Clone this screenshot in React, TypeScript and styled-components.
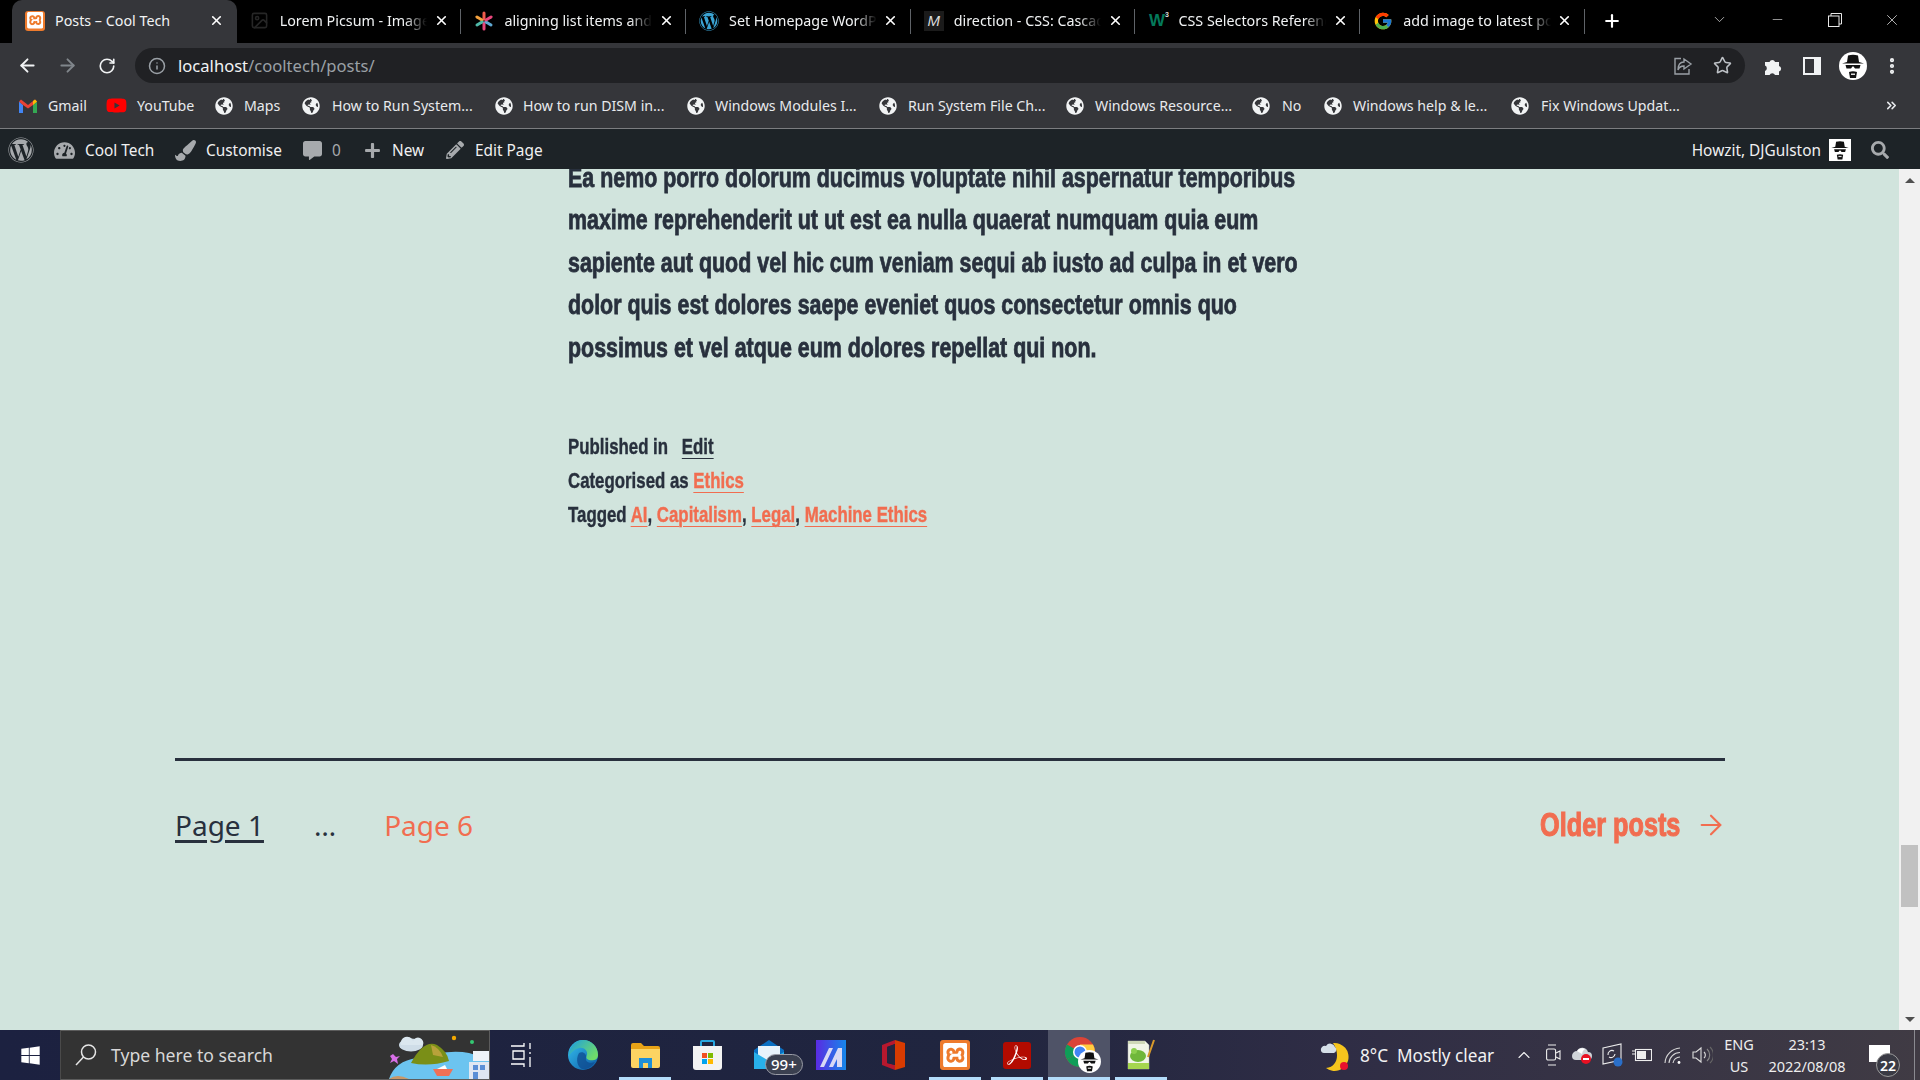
import React from "react";
import styled, { createGlobalStyle } from "styled-components";
import {
  FaGlobeAmericas, FaWordpress, FaTachometerAlt, FaPaintBrush, FaCommentAlt,
  FaPlus, FaPencilAlt, FaSearch, FaWindows, FaYoutube,
} from "react-icons/fa";
import { FcGoogle } from "react-icons/fc";
import { SiXampp, SiAdobeacrobatreader } from "react-icons/si";
import {
  ArrowLeft, ArrowRight, RotateCw, Info, Star, Plus, ChevronDown, Minus, X, ChevronUp, Image as ImageIcon, MoreVertical, ChevronsRight,
} from "lucide-react";

const UI = `"Noto Sans", "Open Sans", sans-serif`;
const HEAVY = `"Liberation Sans", "Arimo", sans-serif`;

const Global = createGlobalStyle`
  html, body { margin: 0; padding: 0; height: 1080px; overflow: hidden; background: #d1e4dd; }
  #root { height: 1080px; }
  * { box-sizing: border-box; }
`;

const Shell = styled.div`
  width: 1920px; height: 1080px; display: flex; flex-direction: column; font-family: ${UI}; overflow: hidden;
`;

/* tab strip */
const TabStrip = styled.div`
  height: 43px; background: #000; display: flex; align-items: stretch; padding-left: 12px; flex: none;
`;
const Tab = styled.div<{ $active?: boolean; $sep?: boolean }>`
  position: relative; width: 224.7px; flex: none; display: flex; align-items: center; padding: 0 12px 2px 13px;
  color: #f1f3f4; font-size: 14.3px;
  background: ${(p) => (p.$active ? "#35363a" : "transparent")};
  border-radius: ${(p) => (p.$active ? "10px 10px 0 0" : "0")};
  &::after {
    content: ""; position: absolute; right: 0; top: 9px; height: 25px; width: 1px;
    background: ${(p) => (p.$sep ? "#5f6368" : "transparent")};
  }
`;
const Favicon = styled.span`
  width: 20px; height: 20px; flex: none; display: flex; align-items: center; justify-content: center; margin-right: 10px;
`;
const TabLabel = styled.span<{ $fade?: boolean }>`
  flex: 1; min-width: 0; overflow: hidden; white-space: nowrap; margin-right: 6px;
  ${(p) => (p.$fade ? "mask-image: linear-gradient(90deg, #000 85%, transparent 100%);" : "")}
`;
const CloseTab = styled.span`
  width: 16px; height: 16px; flex: none; display: flex; align-items: center; justify-content: center; color: #fff;
`;
const NewTab = styled.span`
  width: 54px; flex: none; display: flex; align-items: center; justify-content: center; color: #fff; padding-bottom: 2px;
`;
const StripRight = styled.div`
  margin-left: auto; display: flex; align-items: center;
`;
const WinCtl = styled.span<{ $w: number }>`
  width: ${(p) => p.$w}px; height: 43px; display: flex; align-items: center; justify-content: center; color: #e8e8e8; padding-bottom: 4px;
`;
const Fav = styled.span<{ $bg: string; $size?: number; $tall?: number }>`
  width: ${(p) => p.$size ?? 20}px; height: ${(p) => p.$tall ?? p.$size ?? 20}px; border-radius: 3px; background: ${(p) => p.$bg}; display: flex; align-items: center; justify-content: center; color: #fff;
`;
const MdnM = styled.span`
  width: 20px; height: 20px; background: #1b1b1b; color: #ddd; font-family: "Liberation Sans", sans-serif; font-style: italic; font-size: 15px; display: flex; align-items: center; justify-content: center;
`;
const W3 = styled.span`
  color: #04795a; font-family: "Liberation Sans", sans-serif; font-weight: 700; font-size: 17px; letter-spacing: -1px; display: flex;
  sup { font-size: 7px; color: #ddd; line-height: 8px; margin-left: 1px; }
`;

/* toolbar */
const ToolBar = styled.div`
  height: 40px; background: #35363a; display: flex; align-items: flex-end; flex: none; padding-top: 5px; color: #f1f3f4;
`;
const NavBtn = styled.span<{ $w: number; $dim?: boolean; $pad?: string }>`
  width: ${(p) => p.$w}px; height: 35px; flex: none; display: flex; align-items: center; justify-content: center;
  padding: ${(p) => p.$pad ?? "0"};
  color: ${(p) => (p.$dim ? "#80868b" : "#f1f3f4")};
`;
const Omni = styled.div`
  width: 1610px; height: 35px; flex: none; background: #202124; border-radius: 18px; display: flex; align-items: center; padding: 0 4px 0 13px; margin-right: 8px;
`;
const Url = styled.div`
  margin-left: 12px; font-size: 16.6px; color: #f1f3f4; flex: 1;
  span { color: #9aa0a6; }
`;

/* bookmarks */
const Bookmarks = styled.div`
  height: 46px; background: #35363a; border-bottom: 1px solid #7c7d80; display: flex; align-items: center; padding-left: 19px; flex: none;
`;
const Bookmark = styled.div<{ $w: number }>`
  width: ${(p) => p.$w}px; flex: none; display: flex; align-items: center; white-space: nowrap; font-size: 14.2px; color: #e8eaed;
`;
const BmIcon = styled.span<{ $w: number }>`
  width: ${(p) => p.$w}px; flex: none; display: flex; align-items: center; color: #f1f3f4;
`;
const BmMore = styled.span`
  margin-left: auto; width: 36px; color: #e8eaed; display: flex;
`;

/* admin bar */
const AdminBar = styled.div`
  height: 40px; background: #1d2327; flex: none; display: flex; align-items: center; padding: 2px 0 0 8px; color: #f0f0f1; font-size: 15.4px;
`;
const AdminItem = styled.div<{ $w: number; $dim?: boolean }>`
  width: ${(p) => p.$w}px; flex: none; display: flex; align-items: center; white-space: nowrap;
  color: ${(p) => (p.$dim ? "#a7aaad" : "#f0f0f1")};
`;
const AdminIcon = styled.span<{ $w: number }>`
  width: ${(p) => p.$w}px; flex: none; display: flex; align-items: center; color: #a7aaad;
`;
const AdminRight = styled.div`
  margin-left: auto; display: flex; align-items: center; padding-right: 31px;
`;
const AdminAvatar = styled.span`
  width: 22px; height: 22px; background: #fff; margin: 0 20px 0 8px; display: flex; align-items: center; justify-content: center; overflow: hidden;
`;

/* page */
const Middle = styled.div`
  flex: 1; min-height: 0; display: flex;
`;
const Page = styled.main`
  flex: 1; min-width: 0; background: #d1e4dd; overflow: hidden; color: #28303d;
`;
const Article = styled.article`
  margin-top: -12.5px; padding-left: 568px;
`;
const BodyLine = styled.div`
  font-family: ${HEAVY}; font-weight: 700; font-size: 28px; line-height: 42.5px; white-space: nowrap;
  -webkit-text-stroke: 0.8px #28303d; transform: scaleX(0.765); transform-origin: 0 50%;
`;
const Meta = styled.div`
  margin-top: 61px; font-family: ${HEAVY}; font-weight: 700; font-size: 22px; line-height: 34px; -webkit-text-stroke: 0.4px #28303d;
`;
const MetaRow = styled.div`
  white-space: nowrap; transform: scaleX(0.765); transform-origin: 0 50%;
`;
const EditLink = styled.a`
  margin-left: 18px; color: #28303d; text-decoration: underline; text-underline-offset: 4px; text-decoration-thickness: 1px;
`;
const TagLink = styled.a`
  color: #f16d50; -webkit-text-stroke: 0.4px #f16d50; text-decoration: underline; text-underline-offset: 4px; text-decoration-thickness: 1px;
`;
const Pager = styled.nav`
  margin: 226px 174px 0 175px; border-top: 3px solid #28303d; padding-top: 42px; display: flex; align-items: center; height: 88px;
`;
const PageNum = styled.a<{ $cur?: boolean }>`
  font-size: 28px; line-height: 44px;
  color: ${(p) => (p.$cur ? "#28303d" : "#f16d50")};
  ${(p) => (p.$cur ? "text-decoration: underline; text-decoration-thickness: 3px; text-underline-offset: 4px;" : "")}
`;
const Dots = styled.span`
  font-size: 28px; line-height: 44px; margin: 0 48px 0 50px; color: #28303d;
`;
const Older = styled.a`
  margin-left: auto; display: flex; align-items: center; color: #f16d50; gap: 15px; margin-right: -2px;
`;
const OlderText = styled.span`
  font-family: ${HEAVY}; font-weight: 700; font-size: 33px; line-height: 44px; -webkit-text-stroke: 1.1px #f16d50; transform: scaleX(0.765); transform-origin: 100% 50%;
  white-space: nowrap;
`;

/* scrollbar */
const ScrollBar = styled.div`
  width: 21px; flex: none; background: #f1f1f1; display: flex; flex-direction: column; align-items: center; padding: 9px 0 8px;
`;
const ArrowUp = styled.span`
  width: 0; height: 0; border-left: 5px solid transparent; border-right: 5px solid transparent; border-bottom: 5px solid #505050;
`;
const Thumb = styled.div`
  width: 17px; height: 62px; background: #c1c1c1; margin-top: 662px;
`;
const ArrowDown = styled.span`
  margin-top: auto; width: 0; height: 0; border-left: 5px solid transparent; border-right: 5px solid transparent; border-top: 5px solid #505050;
`;

/* taskbar */
const Taskbar = styled.footer`
  height: 50px; flex: none; display: flex; align-items: stretch; color: #fff;
  background: linear-gradient(90deg, #1c2140 0%, #20253f 50%, #2f2d45 70%, #403b44 100%);
`;
const Start = styled.div`
  width: 60px; flex: none; display: flex; align-items: center; justify-content: center; color: #fff;
`;
const SearchBox = styled.div`
  width: 430px; flex: none; background: #333; border: 1px solid #5c5c5c; border-left-color: #4a4a4a; display: flex; align-items: center; padding-left: 14px; overflow: hidden;
`;
const SearchText = styled.span`
  margin-left: 14px; font-size: 17.6px; color: #d8d8d8; flex: 1; white-space: nowrap;
`;
const TaskCell = styled.div<{ $active?: boolean; $open?: boolean }>`
  position: relative; width: 62px; flex: none; display: flex; align-items: center; justify-content: center;
  padding-left: ${(p) => (p.$active ? "8px" : "0")};
  background: ${(p) => (p.$active ? "#4f5367" : "transparent")};
  &::after {
    content: ""; position: absolute; bottom: 0; height: 3px;
    left: ${(p) => (p.$active ? "0" : "5px")}; right: ${(p) => (p.$active ? "0" : "5px")};
    background: ${(p) => (p.$open ? "#b3dcfa" : "transparent")};
  }
`;
const Badge = styled.span`
  position: absolute; left: 27px; top: 24px; height: 21px; padding: 0 5px; border-radius: 11px; background: #3b4050; border: 1px solid #9a9ca6; color: #fff; font-size: 15px; line-height: 18px; font-weight: 500;
`;
const Tray = styled.div`
  margin-left: auto; display: flex; align-items: center;
`;
const Slot = styled.div<{ $w: number }>`
  width: ${(p) => p.$w}px; flex: none; display: flex; align-items: center; white-space: nowrap; font-size: 17.2px; color: #f2f2f2;
`;
const StackText = styled.div<{ $w: number }>`
  width: ${(p) => p.$w}px; flex: none; display: flex; flex-direction: column; align-items: center; font-size: 14.5px; line-height: 22px; color: #eee;
`;
const NoteBadge = styled.span`
  position: absolute; left: 7px; top: 23px; width: 24px; height: 24px; border-radius: 50%; background: #3a3a44; border: 1px solid #9a9a9a; color: #fff; font-size: 14px; font-weight: 600; display: flex; align-items: center; justify-content: center;
`;
const NoteWrap = styled.div`
  position: relative; width: 45px; height: 50px; flex: none; margin-left: 13px;
`;
const NoteSheet = styled.span`
  position: absolute; left: 0; top: 15px; width: 21px; height: 17px; background: #fff;
`;
const ShowDesk = styled.div`
  width: 6px; height: 50px; flex: none; border-left: 1px solid #8a8a90;
`;

/* drawings */
const Heisenberg = ({ size = 28, round = true }: { size?: number; round?: boolean }) => (
  <svg width={size} height={size} viewBox="0 0 28 28">
    {round ? <circle cx="14" cy="14" r="14" fill="#fff" /> : <rect width="28" height="28" fill="#fff" />}
    <path d="M8 10 L9 3.5 Q14 2 19 3.5 L20 10 L25 11.5 L3 11.5 Z" fill="#111" />
    <path d="M6.5 13 H21.5 L20.5 16.5 H16 L14.5 14.5 H13.5 L12 16.5 H7.5 Z" fill="#111" />
    <path d="M10 20 Q14 18.5 18 20 L17 26 H11 Z" fill="#111" />
    <rect x="12" y="21.5" width="4" height="1.5" fill="#ddd" />
  </svg>
);
const Xampp = ({ size = 20 }: { size?: number }) => (
  <Fav $bg="#ee7b2d" $size={size}><SiXampp size={size * 0.82} color="#fff" /></Fav>
);
const Asterisk = () => (
  <svg width="20" height="20" viewBox="0 0 20 20" strokeWidth="3" strokeLinecap="round">
    <path d="M10 2v6" stroke="#ef5b4c" /><path d="M10 12v6" stroke="#e8467c" />
    <path d="M3 6l5 3" stroke="#f2a03d" /><path d="M12 11l5 3" stroke="#5fa8d3" />
    <path d="M17 6l-5 3" stroke="#e8467c" /><path d="M8 11l-5 3" stroke="#4fb8a8" />
  </svg>
);
const GmailM = () => (
  <svg width="18" height="14" viewBox="0 0 18 14">
    <path d="M0 2.5V14h4V6z" fill="#4285f4" /><path d="M18 2.5V14h-4V6z" fill="#34a853" />
    <path d="M0 2.5 L2 0.5 L9 6 L16 0.5 L18 2.5 L14 6 L9 9.5 L4 6 Z" fill="#ea4335" />
    <path d="M14 6 L18 2.5 L16 0.5 L14 2Z" fill="#fbbc04" />
  </svg>
);
const ShareIcon = () => (
  <svg width="20" height="20" viewBox="0 0 20 20" fill="none" stroke="#9aa0a6" strokeWidth="1.4">
    <path d="M8 2.5H2V18h14v-5" /><path d="M11 3l7 5-7 5v-3C8 10 6 11 5 14c0-5 2-8 6-8z" />
  </svg>
);
const Puzzle = () => (
  <svg width="20" height="20" viewBox="0 0 20 20" fill="#f1f3f4">
    <path d="M2 6h4.5a3 3 0 015.6 0H16v4a2.9 2.9 0 010 5.6V19h-4a2.9 2.9 0 00-5.4 0H2v-4a2.9 2.9 0 000-5.4z" />
  </svg>
);
const SidePanel = () => (
  <svg width="18" height="18" viewBox="0 0 18 18"><path fillRule="evenodd" d="M0 0h18v18H0z M2 2v14h9V2z" fill="#f1f3f4" /></svg>
);
const RestoreIcon = () => (
  <svg width="14" height="14" viewBox="0 0 14 14" fill="none" stroke="#e8e8e8"><rect x="0.5" y="3" width="10.5" height="10.5" /><path d="M3 3V0.5H13.5V11H11" /></svg>
);
const TaskViewIcon = () => (
  <svg width="21" height="24" viewBox="0 0 21 24" fill="none" stroke="#fff" strokeWidth="1.3">
    <path d="M0 3h13v-3M0 21h13v3M2 8h11v8H2z" /><path d="M19 0v6M19 9v2M19 14v10" />
  </svg>
);
const Edge = () => (
  <svg width="30" height="30" viewBox="0 0 30 30">
    <defs>
      <linearGradient id="eg1" x1="0" y1="0" x2="1" y2="1"><stop offset="0" stopColor="#35c1f1" /><stop offset="1" stopColor="#0c59a4" /></linearGradient>
      <linearGradient id="eg2" x1="0" y1="0" x2="1" y2="0.6"><stop offset="0" stopColor="#1b9de2" /><stop offset="1" stopColor="#6fdb6a" /></linearGradient>
    </defs>
    <circle cx="15" cy="15" r="15" fill="url(#eg1)" />
    <path d="M15 0C24 0 30 7 30 15c0 5-5 6-9 5-3-1-3-3-2-5 1-4-3-8-8-7-4 1-8 4-10 8C1 7 7 0 15 0z" fill="url(#eg2)" />
    <path d="M11 13c4-2 8 1 7 5s4 6 9 4c-3 5-8 8-13 7-4-2-7-9-3-16z" fill="#0f4b8f" opacity=".75" />
  </svg>
);
const Folder = () => (
  <svg width="29" height="25" viewBox="0 0 29 25">
    <path d="M0 2a2 2 0 012-2h8l3 3h14a2 2 0 012 2v2H0z" fill="#e8a317" />
    <path d="M0 6h29v17a2 2 0 01-2 2H2a2 2 0 01-2-2z" fill="#fcd462" />
    <path d="M8 15h13v10h-4v-5h-5v5H8z" fill="#1d8fd8" />
  </svg>
);
const Store = () => (
  <svg width="29" height="30" viewBox="0 0 29 30">
    <path d="M8 6V2a1 1 0 011-1h11a1 1 0 011 1v4" fill="none" stroke="#28a7e0" strokeWidth="2" />
    <path d="M0 6h29v21a3 3 0 01-3 3H3a3 3 0 01-3-3z" fill="#f3f3f3" />
    <rect x="9" y="13" width="5" height="5" fill="#f25022" /><rect x="15" y="13" width="5" height="5" fill="#7fba00" />
    <rect x="9" y="19" width="5" height="5" fill="#00a4ef" /><rect x="15" y="19" width="5" height="5" fill="#ffb900" />
  </svg>
);
const Mail = () => (
  <svg width="30" height="30" viewBox="0 0 30 30">
    <path d="M15 0L30 10V29H0V10z" fill="#0a6fc2" />
    <rect x="4" y="6" width="22" height="14" fill="#e8f3fb" />
    <path d="M0 12l15 9 15-9v17H0z" fill="#28b0ea" />
  </svg>
);
const Matlabish = () => (
  <svg width="30" height="30" viewBox="0 0 30 30">
    <defs><linearGradient id="mg" x1="0" y1="0" x2="1" y2="0"><stop offset="0" stopColor="#5a2be2" /><stop offset="1" stopColor="#1687ea" /></linearGradient></defs>
    <rect width="30" height="30" fill="url(#mg)" />
    <path d="M4 27L13 8h4L8 27zM13 27L22 8h4v19h-5v-8l-4 8z" fill="#d9d9f5" />
  </svg>
);
const Office = () => (
  <svg width="23" height="30" viewBox="0 0 23 30">
    <path d="M13 0L23 3V27L13 30V0z" fill="#d83b01" />
    <path d="M13 0L0 5V25L13 30V25L5 23V7L13 4z" fill="#b7182e" />
    <path d="M5 7L13 4V25L5 23z" fill="#23253f" />
  </svg>
);
const Acrobat = () => (
  <Fav $bg="#b30b00" $size={28} $tall={27}><SiAdobeacrobatreader size={20} color="#fff" /></Fav>
);
const Chrome = () => (
  <svg width="36" height="36" viewBox="0 0 36 36">
    <circle cx="15" cy="15" r="15" fill="#db4437" />
    <path d="M15 15L2 22.5A15 15 0 0015 30z" fill="#0f9d58" /><path d="M2 7.5A15 15 0 002 22.5L15 15z" fill="#0f9d58" />
    <path d="M15 15h15A15 15 0 0028 7.5H15z" fill="#ffcd40" /><path d="M15 15L15 30A15 15 0 0030 15z" fill="#ffcd40" />
    <circle cx="15" cy="15" r="7" fill="#fff" /><circle cx="15" cy="15" r="5.5" fill="#4285f4" />
    <g transform="translate(13 13) scale(.82)"><Heisenberg size={28} /></g>
  </svg>
);
const NotepadPP = () => (
  <svg width="28" height="32" viewBox="0 0 28 32">
    <path d="M1 2h17l4 4v24H1z" fill="#f1f5e8" stroke="#bbb" strokeWidth=".5" />
    <path d="M1 2h17v3H1z" fill="#cfd8b8" />
    <ellipse cx="11" cy="17" rx="8" ry="6" fill="#6fb73a" /><circle cx="7" cy="12" r="3" fill="#8bcf4d" />
    <path d="M1 24h21v6H1z" fill="#a5d64f" />
    <path d="M21 18L27 1" stroke="#d89a2b" strokeWidth="2" />
  </svg>
);
const Island = () => (
  <svg width="100" height="48" viewBox="0 0 100 48">
    <ellipse cx="22" cy="14" rx="12" ry="6.5" fill="#cfdde8" />
    <path d="M12 14a6 6 0 0112 -4a5 5 0 0110 4z" fill="#dbe7ef" />
    <circle cx="65" cy="7" r="2.2" fill="#f4a900" /><circle cx="83" cy="11" r="2" fill="#34c972" />
    <path d="M4 23l3 3 4-1-3 3 1 5-4-3-4 2 2-4-2-3z" fill="#d86fe8" />
    <path d="M0 48Q6 30 28 27Q60 18 80 22L100 28V48z" fill="#6cc4f0" />
    <path d="M22 32Q35 8 48 14Q58 20 60 30Q40 36 22 32z" fill="#7a8f17" />
    <path d="M42 14Q50 16 54 26L44 24z" fill="#b9a23a" />
    <path d="M0 48Q8 42 20 48z" fill="#c99868" />
    <path d="M44 38h20l-4 7H48z" fill="#f07057" /><path d="M48 38l8-4 2 4z" fill="#fff" />
    <rect x="84" y="20" width="16" height="10" fill="#eef3f8" /><rect x="80" y="31" width="20" height="17" fill="#dfe7f2" />
    <rect x="84" y="34" width="5" height="5" fill="#5a8fd6" /><rect x="91" y="34" width="5" height="5" fill="#5a8fd6" /><rect x="84" y="41" width="5" height="7" fill="#5a8fd6" />
  </svg>
);
const Moon = () => (
  <svg width="30" height="32" viewBox="0 0 30 32">
    <path d="M13 4a14 14 0 11-7 25C18 28 20 14 13 4z" fill="#f6c51d" />
    <path d="M1 12a4 4 0 015-5 5 5 0 019 1 3.5 3.5 0 01-1 6H4a3 3 0 01-3-2z" fill="#d5dfe8" />
    <circle cx="24" cy="27" r="4" fill="#e8112d" />
  </svg>
);
const Meet = () => (
  <svg width="15" height="22" viewBox="0 0 15 22" fill="none" stroke="#eee" strokeWidth="1.1">
    <path d="M2 1h8M2 21h8" /><rect x="0.6" y="5" width="9" height="11" rx="1.5" /><path d="M10 9l4-2v8l-4-2" />
  </svg>
);
const OneDrive = () => (
  <svg width="20" height="18" viewBox="0 0 20 18">
    <path d="M0 10a5 5 0 015-5a6 6 0 0111 1a4 4 0 010 8H4a4 4 0 01-4-4z" fill="#cfd3d8" />
    <path d="M5 5a6 6 0 018-2a6 6 0 00-3 5z" fill="#fff" />
    <circle cx="14" cy="13" r="5" fill="#e81123" /><rect x="11" y="12" width="6" height="2" fill="#fff" />
  </svg>
);
const Sync = () => (
  <svg width="21" height="24" viewBox="0 0 21 24" fill="none" stroke="#eee" strokeWidth="1.1">
    <path d="M1 5L19 1V17L1 21z" /><path d="M6 12a4 4 0 016-4M13 11a4 4 0 01-6 3" />
    <circle cx="16" cy="19" r="4.5" fill="#2a6fc9" stroke="none" />
  </svg>
);
const Battery = () => (
  <svg width="20" height="14" viewBox="0 0 20 14" fill="none" stroke="#eee" strokeWidth="1.1">
    <rect x="3.5" y="1.5" width="16" height="11" /><rect x="5" y="3" width="9" height="8" fill="#eee" stroke="none" /><path d="M0 3h4M0 6h4" />
  </svg>
);
const Wifi = () => (
  <svg width="17" height="18" viewBox="0 0 17 18" fill="none" stroke="#d8d8d8" strokeWidth="1.1">
    <path d="M1 17A16 16 0 0116 2" /><path d="M5 17A11 11 0 0116 6.5" /><path d="M9 17A7 7 0 0116 11" />
    <circle cx="15" cy="16.5" r="1.4" fill="#fff" stroke="none" />
  </svg>
);
const Speaker = () => (
  <svg width="21" height="20" viewBox="0 0 21 20" fill="none" stroke="#ddd" strokeWidth="1.1">
    <path d="M1 7h3l5-4v14l-5-4H1z" /><path d="M12 7a4 4 0 010 6" /><path d="M15 4a8 8 0 010 12" stroke="#888" /><path d="M18 2a11 11 0 010 16" stroke="#666" />
  </svg>
);
const SearchGlass = () => (
  <svg width="22" height="24" viewBox="0 0 22 24" fill="none" stroke="#e6e6e6" strokeWidth="1.5">
    <circle cx="13.5" cy="9" r="7" /><path d="M8.5 14L1 22" />
  </svg>
);

const TABS = [
  { t: "Lorem Picsum - Images", i: <ImageIcon size={19} color="#262626" /> },
  { t: "aligning list items and", i: <Asterisk /> },
  { t: "Set Homepage WordPress", i: <FaWordpress size={20} color="#3aa3d3" /> },
  { t: "direction - CSS: Cascading", i: <MdnM>M</MdnM> },
  { t: "CSS Selectors Reference", i: <W3>W<sup>3</sup></W3> },
  { t: "add image to latest post", i: <FcGoogle size={20} /> },
];

const MARKS: { t: string; w: number; icon?: React.ReactNode; iw: number }[] = [
  { t: "Gmail", w: 87, icon: <GmailM />, iw: 29 },
  { t: "YouTube", w: 109, icon: <FaYoutube size={21} color="#f00" />, iw: 31 },
  { t: "Maps", w: 87, iw: 29 },
  { t: "How to Run System...", w: 193, iw: 30 },
  { t: "How to run DISM in...", w: 192, iw: 28 },
  { t: "Windows Modules I...", w: 192, iw: 28 },
  { t: "Run System File Ch...", w: 187, iw: 29 },
  { t: "Windows Resource...", w: 186, iw: 29 },
  { t: "No", w: 72, iw: 30 },
  { t: "Windows help & le...", w: 187, iw: 29 },
  { t: "Fix Windows Updat...", w: 180, iw: 30 },
];

const BODY = [
  "Ea nemo porro dolorum ducimus voluptate nihil aspernatur temporibus",
  "maxime reprehenderit ut ut est ea nulla quaerat numquam quia eum",
  "sapiente aut quod vel hic cum veniam sequi ab iusto ad culpa in et vero",
  "dolor quis est dolores saepe eveniet quos consectetur omnis quo",
  "possimus et vel atque eum dolores repellat qui non.",
];

export default function App() {
  return (
    <Shell>
      <Global />
      <TabStrip>
        <Tab $active>
          <Favicon><Xampp /></Favicon>
          <TabLabel>Posts – Cool Tech</TabLabel>
          <CloseTab><X size={15} strokeWidth={2.6} /></CloseTab>
        </Tab>
        {TABS.map((x) => (
          <Tab key={x.t} $sep>
            <Favicon>{x.i}</Favicon>
            <TabLabel $fade>{x.t}</TabLabel>
            <CloseTab><X size={15} strokeWidth={2.6} /></CloseTab>
          </Tab>
        ))}
        <NewTab><Plus size={20} strokeWidth={2.6} /></NewTab>
        <StripRight>
          <WinCtl $w={60}><ChevronDown size={17} strokeWidth={1} /></WinCtl>
          <WinCtl $w={57}><Minus size={15} strokeWidth={1} /></WinCtl>
          <WinCtl $w={57}><RestoreIcon /></WinCtl>
          <WinCtl $w={57}><X size={18} strokeWidth={1} /></WinCtl>
        </StripRight>
      </TabStrip>

      <ToolBar>
        <NavBtn $w={47} $pad="0 0 0 7px"><ArrowLeft size={21} strokeWidth={2.2} /></NavBtn>
        <NavBtn $w={40} $dim><ArrowRight size={21} strokeWidth={2.2} /></NavBtn>
        <NavBtn $w={48} $pad="0 8px 0 0"><RotateCw size={18} strokeWidth={2.2} /></NavBtn>
        <Omni>
          <Info size={18} color="#9aa0a6" />
          <Url>localhost<span>/cooltech/posts/</span></Url>
          <NavBtn $w={40}><ShareIcon /></NavBtn>
          <NavBtn $w={38}><Star size={19} color="#bdc1c6" strokeWidth={2} /></NavBtn>
        </Omni>
        <NavBtn $w={40}><Puzzle /></NavBtn>
        <NavBtn $w={38}><SidePanel /></NavBtn>
        <NavBtn $w={44}><Heisenberg /></NavBtn>
        <NavBtn $w={34}><MoreVertical size={20} strokeWidth={3} /></NavBtn>
      </ToolBar>

      <Bookmarks>
        {MARKS.map((m) => (
          <Bookmark key={m.t} $w={m.w}>
            <BmIcon $w={m.iw}>{m.icon ?? <FaGlobeAmericas size={18} />}</BmIcon>
            {m.t}
          </Bookmark>
        ))}
        <BmMore><ChevronsRight size={15} strokeWidth={2.5} /></BmMore>
      </Bookmarks>

      <AdminBar>
        <AdminItem $w={46}><FaWordpress size={26} color="#a7aaad" /></AdminItem>
        <AdminItem $w={121}><AdminIcon $w={31}><FaTachometerAlt size={21} /></AdminIcon>Cool Tech</AdminItem>
        <AdminItem $w={128}><AdminIcon $w={31}><FaPaintBrush size={21} /></AdminIcon>Customise</AdminItem>
        <AdminItem $w={61} $dim><AdminIcon $w={29}><FaCommentAlt size={19} /></AdminIcon>0</AdminItem>
        <AdminItem $w={82}><AdminIcon $w={28}><FaPlus size={17} /></AdminIcon>New</AdminItem>
        <AdminItem $w={110}><AdminIcon $w={29}><FaPencilAlt size={18} /></AdminIcon>Edit Page</AdminItem>
        <AdminRight>
          Howzit, DJGulston
          <AdminAvatar><Heisenberg size={22} round={false} /></AdminAvatar>
          <FaSearch size={18} color="#a7aaad" />
        </AdminRight>
      </AdminBar>

      <Middle>
        <Page>
          <Article>
            {BODY.map((l) => <BodyLine key={l}>{l}</BodyLine>)}
            <Meta>
              <MetaRow>Published in<EditLink>Edit</EditLink></MetaRow>
              <MetaRow>Categorised as <TagLink>Ethics</TagLink></MetaRow>
              <MetaRow>Tagged <TagLink>AI</TagLink>, <TagLink>Capitalism</TagLink>, <TagLink>Legal</TagLink>, <TagLink>Machine Ethics</TagLink></MetaRow>
            </Meta>
          </Article>
          <Pager>
            <PageNum $cur>Page 1</PageNum>
            <Dots>…</Dots>
            <PageNum>Page 6</PageNum>
            <Older><OlderText>Older posts</OlderText><ArrowRight size={32} strokeWidth={1.6} /></Older>
          </Pager>
        </Page>
        <ScrollBar>
          <ArrowUp />
          <Thumb />
          <ArrowDown />
        </ScrollBar>
      </Middle>

      <Taskbar>
        <Start><FaWindows size={21} /></Start>
        <SearchBox>
          <SearchGlass />
          <SearchText>Type here to search</SearchText>
          <Island />
        </SearchBox>
        <TaskCell><TaskViewIcon /></TaskCell>
        <TaskCell><Edge /></TaskCell>
        <TaskCell $open><Folder /></TaskCell>
        <TaskCell><Store /></TaskCell>
        <TaskCell><Mail /><Badge>99+</Badge></TaskCell>
        <TaskCell><Matlabish /></TaskCell>
        <TaskCell><Office /></TaskCell>
        <TaskCell $open><Xampp size={30} /></TaskCell>
        <TaskCell $open><Acrobat /></TaskCell>
        <TaskCell $open $active><Chrome /></TaskCell>
        <TaskCell $open><NotepadPP /></TaskCell>
        <Tray>
          <Slot $w={40}><Moon /></Slot>
          <Slot $w={37}>8°C</Slot>
          <Slot $w={117}>Mostly clear</Slot>
          <Slot $w={32}><ChevronUp size={20} strokeWidth={1.3} /></Slot>
          <Slot $w={26}><Meet /></Slot>
          <Slot $w={30}><OneDrive /></Slot>
          <Slot $w={30}><Sync /></Slot>
          <Slot $w={32}><Battery /></Slot>
          <Slot $w={28}><Wifi /></Slot>
          <Slot $w={28}><Speaker /></Slot>
          <StackText $w={38}><span>ENG</span><span>US</span></StackText>
          <StackText $w={98}><span>23:13</span><span>2022/08/08</span></StackText>
          <NoteWrap><NoteSheet /><NoteBadge>22</NoteBadge></NoteWrap>
          <ShowDesk />
        </Tray>
      </Taskbar>
    </Shell>
  );
}
